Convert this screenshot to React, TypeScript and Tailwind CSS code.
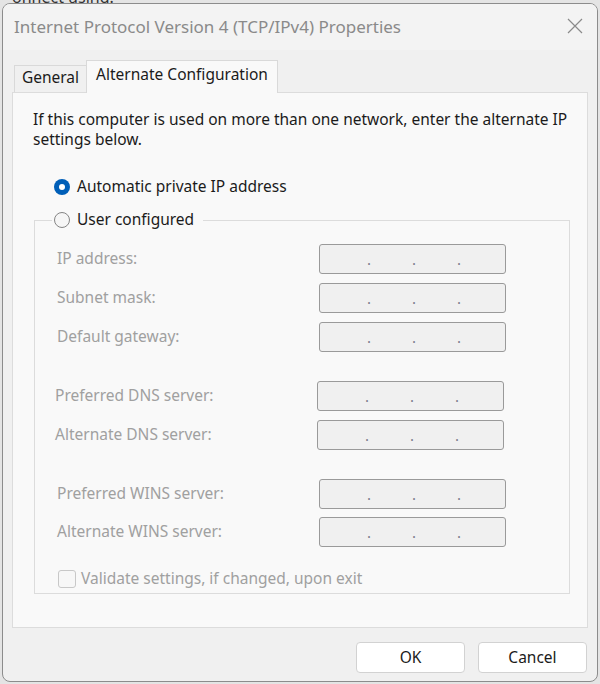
import React from "react";

const FONT = { fontFamily: '"Noto Sans", "Open Sans", sans-serif' };

// ─── Small pieces ────────────────────────────────────────────────────────────

function Radio({ checked }: { checked: boolean }) {
  return checked ? (
    <span className="flex items-center justify-center w-[16px] h-[16px] rounded-full bg-[#005fb8]">
      <span className="w-[6px] h-[6px] rounded-full bg-white" />
    </span>
  ) : (
    <span className="w-[16px] h-[16px] rounded-full border border-[#858585] bg-[#f6f6f6]" />
  );
}

function IpBox() {
  return (
    <div className="flex items-center w-[187px] h-[30px] rounded-[3px] border border-[#9a9a9a] bg-[#f0f0f0] pl-[47px] gap-[41px] text-[15px] text-[#7c7c8c] leading-none">
      <span>.</span>
      <span>.</span>
      <span>.</span>
    </div>
  );
}

function FieldRow({ label }: { label: string }) {
  return (
    <div className="flex items-center h-[30px]">
      <span className="w-[262px] text-[#a0a0a0]">{label}</span>
      <IpBox />
    </div>
  );
}

// ─── Dialog ─────────────────────────────────────────────────────────────────

export default function App() {
  return (
    <div
      className="relative w-[600px] h-[684px] bg-[#e4e4e4] pl-[2px] pt-[3px] overflow-hidden"
      style={FONT}
    >
      {/* window behind */}
      <span className="absolute left-[12px] top-[-15px] text-[16px] text-[#333]">onnect using:</span>

      <div className="relative flex flex-col w-[596px] h-[679px] rounded-[8px] border border-[#8c8c8c] bg-[#f0f0f0] overflow-hidden">
        {/* Title bar */}
        <div className="flex items-center justify-between h-[46px] bg-[#f3f3f3] pl-[11px] pr-[14px]">
          <span className="text-[17px] text-[#8a8a8a]">
            Internet Protocol Version 4 (TCP/IPv4) Properties
          </span>
          <svg width="16" height="16" viewBox="0 0 16 16" className="mt-[-2px]">
            <path d="M1 1 L15 15 M15 1 L1 15" stroke="#8a8a8a" strokeWidth="1.2" />
          </svg>
        </div>

        <div className="flex flex-col px-[9px] pt-[10px] text-[15.5px] text-[#1b1b1b]">
          {/* Tabs */}
          <div className="flex items-end pl-[2px]">
            <div className="flex items-center justify-center w-[72px] h-[28px] border-t border-l border-[#d9d9d9] bg-[#f0f0f0] mb-[-1px] pb-[3px]">
              General
            </div>
            <div className="relative z-10 flex items-center justify-center w-[192px] h-[33px] border border-b-0 border-[#d9d9d9] bg-[#f9f9f9] mb-[-1px] pb-[5px]">
              Alternate Configuration
            </div>
          </div>

          {/* Panel */}
          <div className="flex flex-col h-[536px] border border-[#dcdcdc] bg-[#f9f9f9]">
            <p className="mt-[16px] ml-[20px] leading-[20px]">
              If this computer is used on more than one network, enter the alternate IP
              <br />
              settings below.
            </p>

            <div className="flex items-center gap-[7px] h-[20px] mt-[28px] ml-[41px]">
              <Radio checked />
              <span>Automatic private IP address</span>
            </div>

            <fieldset className="mt-[13px] ml-[21px] w-[536px] border border-[#dcdcdc] pb-[5px]">
              <legend className="ml-[17px] pl-[2px] pr-[9px]">
                <span className="flex items-center gap-[7px] h-[20px]">
                  <Radio checked={false} />
                  <span>User configured</span>
                </span>
              </legend>

              <div className="flex flex-col pl-[22px]">
                <div className="flex flex-col gap-[9px] mt-[14px]">
                  <FieldRow label="IP address:" />
                  <FieldRow label="Subnet mask:" />
                  <FieldRow label="Default gateway:" />
                </div>

                <div className="flex flex-col gap-[9px] mt-[29px] ml-[-2px]">
                  <FieldRow label="Preferred DNS server:" />
                  <FieldRow label="Alternate DNS server:" />
                </div>

                <div className="flex flex-col gap-[8px] mt-[29px]">
                  <FieldRow label="Preferred WINS server:" />
                  <FieldRow label="Alternate WINS server:" />
                </div>

                <div className="flex items-center gap-[5px] mt-[22px] ml-[1px] h-[19px]">
                  <span className="w-[18px] h-[18px] rounded-[3px] border border-[#c8c8c8] bg-[#f7f7f7]" />
                  <span className="text-[#a0a0a0]">Validate settings, if changed, upon exit</span>
                </div>
              </div>
            </fieldset>
          </div>

          {/* Buttons */}
          <div className="flex justify-end gap-[13px] mt-[14px] pr-[1px]">
            <button className="w-[109px] h-[31px] rounded-[4px] border border-[#d2d2d2] bg-white text-[#1b1b1b]">
              OK
            </button>
            <button className="w-[109px] h-[31px] rounded-[4px] border border-[#d2d2d2] bg-white text-[#1b1b1b]">
              Cancel
            </button>
          </div>
        </div>
      </div>
    </div>
  );
}
